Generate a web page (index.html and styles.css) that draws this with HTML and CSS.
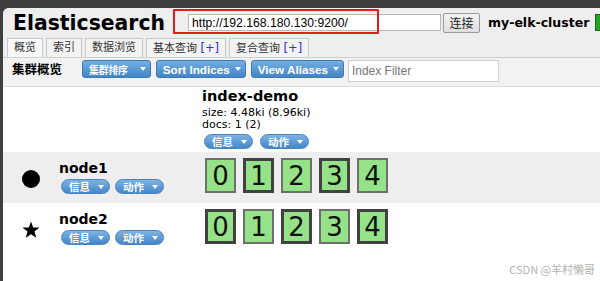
FILE: index.html
```html
<!DOCTYPE html>
<html lang="zh">
<head>
<meta charset="utf-8">
<title>Elasticsearch Head</title>
<link rel="stylesheet" href="styles.css">
</head>
<body>
<div class="app">
  <header class="top">
    <div class="brand-row">
      <h1 class="brand">Elasticsearch</h1>
      <input class="url" type="text" value="http://192.168.180.130:9200/">
      <button class="connect">连接</button>
      <span class="cluster">my-elk-cluster</span>
      <span class="health"></span>
    </div>
    <nav class="tabs">
      <span class="tab active">概览</span>
      <span class="tab">索引</span>
      <span class="tab">数据浏览</span>
      <span class="tab">基本查询 <b class="plus">[+]</b></span>
      <span class="tab">复合查询 <b class="plus">[+]</b></span>
    </nav>
  </header>
  <div class="toolbar">
    <span class="title">集群概览</span>
    <span class="btn cjk">集群排序<i class="caret"></i></span>
    <span class="btn">Sort Indices<i class="caret"></i></span>
    <span class="btn">View Aliases<i class="caret"></i></span>
    <input class="filter" type="text" placeholder="Index Filter">
  </div>
  <div class="overview">
    <div class="corner"></div>
    <div class="idx-head">
      <div class="idx-name">index-demo</div>
      <div class="meta">size: 4.48ki (8.96ki)</div>
      <div class="meta">docs: 1 (2)</div>
      <div class="sbtns"><span class="sbtn">信息<i class="caret"></i></span><span class="sbtn">动作<i class="caret"></i></span></div>
    </div>

    <div class="node odd">
      <svg class="nicon" viewBox="0 0 18 18"><circle cx="9" cy="9" r="9" fill="#000"/></svg>
      <div class="ninfo">
        <div class="nname">node1</div>
        <div class="sbtns nb"><span class="sbtn">信息<i class="caret"></i></span><span class="sbtn">动作<i class="caret"></i></span></div>
      </div>
    </div>
    <div class="shards odd">
      <span class="shard">0</span>
      <span class="shard primary">1</span>
      <span class="shard">2</span>
      <span class="shard primary">3</span>
      <span class="shard">4</span>
    </div>

    <div class="node">
      <svg class="nicon" viewBox="0 0 18 18"><polygon points="9,0.5 11.2,6.4 17.5,6.6 12.5,10.5 14.3,16.8 9,13.2 3.7,16.8 5.5,10.5 0.5,6.6 6.8,6.4" fill="#000"/></svg>
      <div class="ninfo">
        <div class="nname">node2</div>
        <div class="sbtns nb"><span class="sbtn">信息<i class="caret"></i></span><span class="sbtn">动作<i class="caret"></i></span></div>
      </div>
    </div>
    <div class="shards">
      <span class="shard primary">0</span>
      <span class="shard">1</span>
      <span class="shard primary">2</span>
      <span class="shard">3</span>
      <span class="shard primary">4</span>
    </div>
  </div>
  <div class="watermark">CSDN @羊村懒哥</div>
</div>
<div class="redbox"></div>
</body>
</html>
```
FILE: styles.css
```css
html, body {
  margin: 0;
  height: 100%;
  overflow: hidden;
}
body {
  background: #3f3f3f;
  font-family: "DejaVu Sans", "Noto Sans CJK SC", sans-serif;
  font-size: 11px;
  color: #000;
  position: relative;
}
.app {
  margin: 8px 0 0 3px;
  height: 273px;
  background: #fff;
  border-top-left-radius: 6px;
  overflow: hidden;
  position: relative;
}
.top {
  background: #eeeeee;
}
.brand-row {
  display: flex;
  align-items: center;
  height: 29px;
  padding-left: 10px;
  white-space: nowrap;
}
.brand-row > * {
  flex: none;
}
.brand {
  margin: 0;
  font-size: 20.4px;
  font-weight: bold;
  line-height: 24px;
}
.url {
  margin: 0 0 0 23px;
  width: 253px;
  height: 17px;
  box-sizing: border-box;
  border: 1px solid #b8b8b8;
  padding: 0 3px;
  font: 12.2px "Liberation Sans", sans-serif;
  color: #000;
  background: #fff;
}
.connect {
  margin-left: 2px;
  width: 37px;
  height: 20px;
  box-sizing: border-box;
  padding: 0;
  border: 1px solid #9a9a9a;
  border-radius: 2px;
  background: linear-gradient(#f4f4f4, #dedede);
  font: 12px "Noto Sans CJK SC", sans-serif;
  color: #222;
}
.cluster {
  margin-left: 8px;
  font-size: 12.5px;
  font-weight: bold;
}
.health {
  margin-left: 6px;
  width: 12px;
  height: 15px;
  background: #22a322;
  border: 1px solid #176d17;
}
.tabs {
  display: flex;
  align-items: flex-end;
  gap: 3px;
  height: 20px;
  padding-left: 4px;
  border-bottom: 1px solid #cfcfcf;
}
.tab {
  height: 19px;
  box-sizing: border-box;
  padding: 0 6px;
  border: 1px solid #c9c9c9;
  border-bottom: none;
  background: #f3f3f3;
  font: 11px/18px "DejaVu Sans", "Noto Sans CJK SC", sans-serif;
  color: #333;
  white-space: nowrap;
}
.tab.active {
  background: #f9f9f9;
}
.plus {
  font-weight: normal;
  font-size: 11.5px;
  color: #2f2fd6;
}
.toolbar {
  display: flex;
  align-items: flex-start;
  height: 26px;
  padding: 2px 0 0 9px;
  background: #f2f2f2;
  border-bottom: 1px solid #dcdcdc;
}
.toolbar > * {
  flex: none;
}
.title {
  font: bold 12.5px/18px "Noto Sans CJK SC", sans-serif;
  margin-right: 20px;
}
.btn {
  display: inline-flex;
  align-items: center;
  height: 18px;
  box-sizing: border-box;
  padding: 0 4px 0 6px;
  margin-right: 5px;
  border: 1px solid #3f79b3;
  border-radius: 3px;
  background: linear-gradient(#74aee2, #4285c7);
  color: #fff;
  font: bold 11.7px "Liberation Sans", sans-serif;
  white-space: nowrap;
}
.btn.cjk {
  font: bold 10px "Noto Sans CJK SC", sans-serif;
  padding-right: 4px;
  letter-spacing: -0.3px;
}
.btn .caret {
  margin-left: 5px;
}
.btn.cjk .caret {
  margin-left: 12px;
}
.caret {
  display: inline-block;
  width: 0;
  height: 0;
  border-top: 4px solid #fff;
  border-left: 3.5px solid transparent;
  border-right: 3.5px solid transparent;
}
.filter {
  margin: 0 0 0 -1px;
  width: 151px;
  height: 22px;
  box-sizing: border-box;
  border: 1px solid #cfcfcf;
  padding: 0 3px;
  font: 12px "Liberation Sans", sans-serif;
  background: #fff;
}
.filter::placeholder {
  color: #777;
}
.overview {
  display: grid;
  grid-template-columns: 199px 1fr;
  grid-template-rows: 65px 51px 50px;
}
.idx-head {
  overflow: hidden;
  padding-top: 1px;
}
.idx-name {
  font-size: 14.5px;
  font-weight: bold;
  line-height: 17px;
}
.meta {
  line-height: 12px;
}
.idx-name + .meta {
  margin-top: 2px;
}
.sbtns {
  display: flex;
  gap: 7px;
  margin-top: 3px;
  padding-left: 2px;
}
.sbtns.nb {
  gap: 5px;
  margin-top: 2px;
}
.sbtn {
  display: inline-flex;
  align-items: center;
  height: 15px;
  width: 49px;
  box-sizing: border-box;
  padding-left: 7px;
  border: 1px solid #4a83bd;
  border-radius: 8px;
  background: linear-gradient(#7bb3e4, #4486c8);
  color: #fff;
  font: bold 10.5px/13px "Noto Sans CJK SC", sans-serif;
  overflow: hidden;
}
.sbtn .caret {
  margin-left: 8px;
}
.odd {
  background: #eeeeee;
}
.node {
  display: flex;
  align-items: flex-start;
  padding: 8px 0 0 19px;
}
.nicon {
  width: 18px;
  height: 18px;
  margin: 10px 19px 0 0;
  flex: none;
}
.nname {
  font-size: 14px;
  font-weight: bold;
  line-height: 17px;
}
.shards {
  display: flex;
  align-items: flex-start;
  gap: 7px;
  padding: 6px 0 0 3px;
}
.shard {
  width: 31px;
  height: 35px;
  box-sizing: border-box;
  border: 2px solid #6f6f6f;
  background: #96e288;
  display: flex;
  align-items: center;
  justify-content: center;
  font: 26px "DejaVu Sans", sans-serif;
  color: #111;
}
.shard.primary {
  border: 3px solid #424242;
}
.watermark {
  position: absolute;
  right: 5px;
  bottom: 4px;
  font: 11px "Noto Sans CJK SC", sans-serif;
  color: #b2b2b2;
}
.redbox {
  position: absolute;
  left: 173px;
  top: 9px;
  width: 206px;
  height: 25px;
  box-sizing: border-box;
  border: 2px solid #e41c1c;
  border-radius: 1px;
}
```
